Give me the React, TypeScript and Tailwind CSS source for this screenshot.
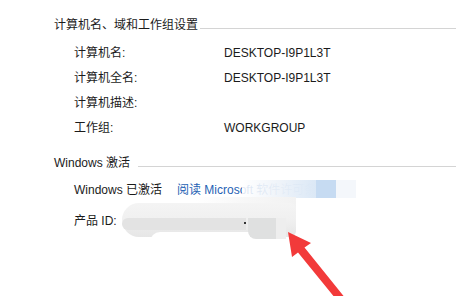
import React from 'react';

const font = { fontFamily: '"Liberation Sans", "Noto Sans CJK SC", sans-serif' };

const Heading: React.FC<{ title: string; width: string }> = ({ title, width }) => (
  <div className="flex items-center h-4 text-[12px] text-[#1b1b1b]">
    <span className={`whitespace-nowrap shrink-0 ${width}`}>{title}</span>
    <div className="flex-1 h-px bg-[#d4d4d4] mt-[6px]" />
  </div>
);

const Row: React.FC<{ label: string; value?: string }> = ({ label, value }) => (
  <div className="flex items-center h-[25px] pl-5 text-[12px] text-[#1b1b1b]">
    <span className="w-[150px] whitespace-nowrap">{label}</span>
    {value && <span className="whitespace-nowrap">{value}</span>}
  </div>
);

export default function App() {
  return (
    <div className="relative w-[456px] h-[296px] bg-white overflow-hidden" style={font}>
      <div className="flex flex-col pl-[54px] pt-[17px]">
        <Heading title="计算机名、域和工作组设置" width="w-[146px]" />
        <div className="flex flex-col mt-[7px]">
          <Row label="计算机名:" value="DESKTOP-I9P1L3T" />
          <Row label="计算机全名:" value="DESKTOP-I9P1L3T" />
          <Row label="计算机描述:" />
          <Row label="工作组:" value="WORKGROUP" />
        </div>
        <div className="mt-[15px]">
          <Heading title="Windows 激活" width="w-[84px]" />
        </div>
        <div className="flex items-center h-[25px] pl-5 mt-[6px] text-[12px] text-[#1b1b1b]">
          <span className="whitespace-nowrap">Windows 已激活</span>
          <span className="ml-[15px] whitespace-nowrap text-[#1f62b4]">阅读 Microsoft 软件许可条款</span>
        </div>
        <div className="flex items-center h-[25px] pl-5 mt-[6px] text-[12px] text-[#1b1b1b]">
          <span className="whitespace-nowrap">产品 ID:</span>
        </div>
      </div>

      {/* smudges covering private info */}
      <div className="absolute left-[242px] top-[180px] w-[74px] h-[18px] bg-gradient-to-r from-white/85 via-[#eef3f9]/95 to-[#dbe8f6]" />
      <div className="absolute left-[316px] top-[180px] w-[20px] h-[18px] bg-[#c6dbf2]" />
      <div className="absolute left-[336px] top-[180px] w-[20px] h-[18px] bg-[#f4f7fb]" />
      <div className="absolute left-[196px] top-[197px] w-[100px] h-[14px] bg-gradient-to-r from-white via-[#f7f7f7] to-[#f2f2f2]" />
      <div className="absolute left-[122px] top-[203px] w-[174px] h-[34px] rounded-l-[18px] rounded-r-[6px] bg-gradient-to-b from-[#f4f4f4] via-[#f0f0f0] to-[#e6e6e6]" />
      <div className="absolute left-[122px] top-[218px] w-[124px] h-[12px] rounded-l-[10px] bg-[#e3e3e3]" />
      <div className="absolute left-[150px] top-[232px] w-[100px] h-[10px] bg-white rounded-tl-[40px]" />
      <div className="absolute left-[244px] top-[222px] w-[2px] h-[2px] bg-[#333]" />
      <div className="absolute left-[248px] top-[218px] w-[28px] h-[21px] rounded-bl-[8px] bg-[#dfe0e0]" />
      <div className="absolute left-[276px] top-[218px] w-[10px] h-[21px] bg-[#eeeeee]" />

      {/* red arrow */}
      <svg className="absolute left-0 top-0" width="456" height="296" viewBox="0 0 456 296">
        <polygon
          points="288,232 311,243 304.5,247.5 348,301.5 342,306.5 298,252.5 292,257"
          fill="#f23a3a"
        />
      </svg>
    </div>
  );
}
